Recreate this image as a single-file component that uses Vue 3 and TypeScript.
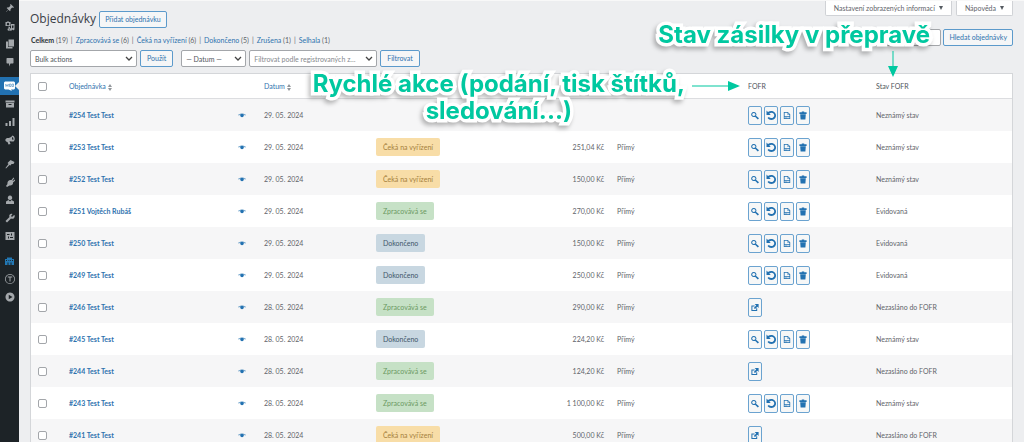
<script setup lang="ts">
import { ref } from 'vue'

type Status = 'pending' | 'processing' | 'done' | ''
interface Order {
  id: number
  name: string
  date: string
  status: Status
  total: string
  origin: string
  sent: boolean
  state: string
}

const statusLabels: Record<string, string> = {
  pending: 'Čeká na vyřízení',
  processing: 'Zpracovává se',
  done: 'Dokončeno',
}

const order = (id: number, name: string, date: string, status: Status, total: string, state: string): Order => ({
  id, name, date, status, total, state,
  origin: total ? 'Přímý' : '',
  sent: state !== 'Nezasláno do FOFR',
})

const orders: Order[] = [
  order(254, 'Test Test', '29. 05. 2024', '', '', 'Neznámý stav'),
  order(253, 'Test Test', '29. 05. 2024', 'pending', '251,04 Kč', 'Neznámý stav'),
  order(252, 'Test Test', '29. 05. 2024', 'pending', '150,00 Kč', 'Neznámý stav'),
  order(251, 'Vojtěch Rubáš', '29. 05. 2024', 'processing', '270,00 Kč', 'Evidovaná'),
  order(250, 'Test Test', '29. 05. 2024', 'done', '150,00 Kč', 'Evidovaná'),
  order(249, 'Test Test', '29. 05. 2024', 'done', '250,00 Kč', 'Evidovaná'),
  order(246, 'Test Test', '28. 05. 2024', 'processing', '290,00 Kč', 'Nezasláno do FOFR'),
  order(245, 'Test Test', '28. 05. 2024', 'done', '224,20 Kč', 'Neznámý stav'),
  order(244, 'Test Test', '28. 05. 2024', 'processing', '124,20 Kč', 'Nezasláno do FOFR'),
  order(243, 'Test Test', '28. 05. 2024', 'processing', '1 100,00 Kč', 'Neznámý stav'),
  order(241, 'Test Test', '28. 05. 2024', 'pending', '500,00 Kč', 'Nezasláno do FOFR'),
]

const views = [
  { label: 'Celkem', count: 19 },
  { label: 'Zpracovává se', count: 6 },
  { label: 'Čeká na vyřízení', count: 6 },
  { label: 'Dokončeno', count: 5 },
  { label: 'Zrušena', count: 1 },
  { label: 'Selhala', count: 1 },
]

interface Item { name: string; path: string; kind?: string }
const menu: Item[][] = [
  [
    { name: 'Příspěvky', path: 'M10.4 3l1-1 6.6 6.5-1 1c-.9.2-1.8 0-2.600-.3L11 12.500c.4 1.500.2 3-.9 4.200L6.800 13.400 3 17.500 2 17.900l.5-1 4-3.900L3.300 9.800c1.200-1 2.700-1.300 4.200-.9l3.300-3.400c-.4-.8-.5-1.700-.4-2.500z' },
    { name: 'Média', path: 'M1 2h2.500l1-1h3l1 1H11v8H1zM6 3.500a2.500 2.500 0 1 0 .01 0zM12 6h7v10a2.500 2.500 0 1 1-2-2.400V9h-3v8a2.500 2.500 0 1 1-2-2.400zM6 11.500h4V17a2.500 2.500 0 1 1-2-2.400V13H6z' },
    { name: 'Stránky', path: 'M7 1h11v14H7zM2 5h4v11h9v3H2z' },
    { name: 'Komentáře', path: 'M4 2h12l1 1v9l-1 1h-5l-3 6v-6H4l-1-1V3z' },
  ],
  [
    { name: 'WooCommerce', path: '', kind: 'woo' },
    { name: 'Produkty', path: 'M1 3h18v4H1zM2 8h16v9H2zm5 2v2h6v-2z' },
    { name: 'Analýzy', path: 'M1 12h4v6H1zM8 8h4v10H8zM15 2h4v16h-4z' },
    { name: 'Marketing', path: 'M15 1c5 1 6 9 2 12-3 0-6-1-8-.5L11 18l-4 1-2-5c-5 0-6-6-1-8 5 0 8-1 11-5zm0 3c-2 2-1 5 1 6.500 1.500-2 1-5-1-6.500z' },
  ],
  [
    { name: 'Vzhled', path: 'M11 2l8 4-2 4-4 0-2 3-2-1-7 7-1-1 6-8-2-2 3-3z' },
    { name: 'Pluginy', path: 'M13 6l4-5 1.500 1.500L15 7l1 1 3.500-3L21 6.500 16 11c1 4-3 7-7 6l-5 3-2-2 3-4c-1-4 2-8 6-8z' },
    { name: 'Uživatelé', path: 'M10 1a4.500 4.500 0 1 1-.01 0zM2 18v-5l5-3 3 3 3-3 5 3v5z' },
    { name: 'Nástroje', path: 'M17 5l-3 3-2-2 3-4c-4-2-8 2-6 6l-8 8 3 3 8-8c4 2 9-2 7-7z' },
    { name: 'Nastavení', path: 'M1 2h18v16H1zm3 4v2h5V6zm8-1v4h2V5zm-6 6v4h2v-4zm4 1v2h6v-2z' },
  ],
  [
    { name: 'FOFR', path: 'M1 6h4V3h10v3h4v12h-5v-5h-2v5H8v-5H6v5H1zm2 2v2h2V8zm5 0v2h1.500V8zm3 0v2h1.500V8zm4 0v2h2V8z', kind: 'blue' },
    { name: 'Toret', path: 'M10 0a10 10 0 1 1-.01 0zm0 1.500a8.500 8.500 0 1 0 .01 0zM5.500 5h9v2H11v8H9V7H5.500z' },
    { name: 'Sbalit menu', path: 'M10 1a9 9 0 1 1-.01 0zM7.500 5.500v9L15 10z' },
  ],
]

const actionIcons: Item[] = [
  { name: 'Zobrazit', path: 'M7 1a6.500 6.500 0 1 1-.01 0zm0 2.500a4 4 0 1 0 .01 0zM10 13l2.500-2.500 7.500 6.500-3 3z' },
  { name: 'Obnovit', path: 'M1 1l3 3C10-1 20 3 20 11c0 9-12 12-17 5l2.500-2c4 4 11 2 11-3 0-6-6-7-10-4l3 3H1z' },
  { name: 'Štítek', path: 'M2 1h10l6 6v12H2zm2 2v8h12V8h-5V3zm8 1v3h3zM4 13v4h2v-3h1v3h2v-3h1v3h2v-3h1v3h3v-4z' },
  { name: 'Smazat', path: 'M7 0h6v2h6v4H1V2h6zM3 7h14l-1 13H4z' },
]
const sendIcon: Item[] = [
  { name: 'Odeslat', path: 'M9 1h10v10l-3-3-6 6-3-3 6-6zM1 5h8v2.500H3.500v9H13V12h2.500v7H1z' },
]

const allSelected = ref(false)
const bulk = ref('Bulk actions')
const month = ref('— Datum —')
const customer = ref('Filtrovat podle registrovaných z…')
const search = ref('')
</script>

<template>
  <div class="admin">
    <nav class="sidebar" aria-label="Hlavní menu">
      <ul v-for="(group, g) in menu" :key="g">
        <li v-for="item in group" :key="item.name">
          <a href="#" :class="item.kind" :aria-label="item.name">
            <svg v-if="item.kind === 'woo'" class="woo-icon" viewBox="0 0 22 20" aria-hidden="true">
              <path fill="#fff" d="M2 1h18l2 2v12l-2 2h-6l2 3-7-3H2l-2-2V3z" />
              <path fill="none" stroke="#2271b1" stroke-width="1" d="M3 6l1 5 2-4 2 4 1-5M11 6h3v5h-3zM16 6h3v5h-3z" />
            </svg>
            <svg v-else viewBox="0 0 20 20" aria-hidden="true"><path fill-rule="evenodd" :d="item.path" /></svg>
          </a>
        </li>
      </ul>
    </nav>

    <main>
      <div class="screen-tabs">
        <button type="button">Nastavení zobrazených informací <span class="down"></span></button>
        <button type="button">Nápověda <span class="down"></span></button>
      </div>

      <header class="heading">
        <h1>Objednávky</h1>
        <a href="#" class="btn">Přidat objednávku</a>
        <form class="search" @submit.prevent>
          <input v-model="search" type="search" aria-label="Hledat objednávky">
          <button type="submit" class="btn">Hledat objednávky</button>
        </form>
      </header>

      <ul class="views">
        <li v-for="(view, i) in views" :key="view.label">
          <a href="#" :class="{ current: i === 0 }">{{ view.label }}</a> ({{ view.count }})
        </li>
      </ul>

      <div class="filters">
        <select v-model="bulk" class="bulk" aria-label="Hromadné akce"><option>Bulk actions</option></select>
        <button type="button" class="btn apply">Použít</button>
        <select v-model="month" class="month" aria-label="Datum"><option>— Datum —</option></select>
        <select v-model="customer" class="customer" aria-label="Zákazník"><option>Filtrovat podle registrovaných z…</option></select>
        <button type="button" class="btn">Filtrovat</button>
      </div>

      <div class="table-area">
        <table>
          <colgroup>
            <col class="c-check"><col class="c-order"><col class="c-date"><col class="c-status">
            <col class="c-total"><col class="c-origin"><col class="c-fofr"><col class="c-state">
          </colgroup>
          <thead>
            <tr>
              <td class="check"><input v-model="allSelected" type="checkbox" aria-label="Vybrat vše"></td>
              <th scope="col"><a href="#">Objednávka <span class="sort"></span></a></th>
              <th scope="col"><a href="#">Datum <span class="sort"></span></a></th>
              <td></td>
              <td></td>
              <td></td>
              <th scope="col">FOFR</th>
              <th scope="col">Stav FOFR</th>
            </tr>
          </thead>
          <tbody>
            <tr v-for="row in orders" :key="row.id">
              <td class="check"><input type="checkbox" :checked="allSelected" :aria-label="`Vybrat #${row.id}`"></td>
              <td>
                <div class="order-cell">
                  <a href="#">#{{ row.id }} {{ row.name }}</a>
                  <button type="button" class="preview" aria-label="Náhled">
                    <svg viewBox="0 0 16 10" aria-hidden="true">
                      <path opacity=".6" d="M0 4C4 0 12 0 16 4L15 5C11 3 5 3 1 5z" />
                      <circle cx="8" cy="5" r="3.500" />
                    </svg>
                  </button>
                </div>
              </td>
              <td>{{ row.date }}</td>
              <td><mark v-if="row.status" :class="row.status">{{ statusLabels[row.status] }}</mark></td>
              <td class="total">{{ row.total }}</td>
              <td class="origin">{{ row.origin }}</td>
              <td>
                <div class="actions">
                  <button v-for="icon in row.sent ? actionIcons : sendIcon" :key="icon.name" type="button" :aria-label="icon.name">
                    <svg viewBox="0 0 20 20" aria-hidden="true"><path fill-rule="evenodd" :d="icon.path" /></svg>
                  </button>
                </div>
              </td>
              <td>{{ row.state }}</td>
            </tr>
          </tbody>
        </table>
      </div>
    </main>

    <div class="note note-state">
      <p>Stav zásilky v přepravě</p>
      <svg class="arrow-down" viewBox="0 0 10 26" aria-hidden="true"><path d="M4.500 0h1v15H10L5 26 0 15h4.500z" /></svg>
    </div>
    <div class="note note-actions">
      <p>Rychlé akce (podání, tisk štítků,<br>sledování...)</p>
      <svg class="arrow-right" viewBox="0 0 48 10" aria-hidden="true"><path d="M0 4.500h36V0l12 5-12 5V5.500H0z" /></svg>
    </div>
  </div>
</template>

<style>
body {
  overflow: hidden;
  background: #f0f0f1;
}
</style>

<style scoped>
* {
  box-sizing: border-box;
}

.admin {
  position: relative;
  display: flex;
  height: 100vh;
  overflow: hidden;
  background: #edeef0;
  color: #5f646a;
  font: 7px/10px Lato, "Open Sans", sans-serif;
}

a {
  color: #2e72ae;
  text-decoration: none;
}

ul {
  margin: 0;
  padding: 0;
  list-style: none;
}

button,
input,
select {
  margin: 0;
  font: inherit;
}

.sidebar {
  flex: none;
  width: 19px;
  margin-top: -1px;
  background: #1d2327;
}

.sidebar ul + ul {
  margin-top: 6px;
}

.sidebar ul:last-child {
  margin-top: 7px;
}

.sidebar a {
  position: relative;
  display: flex;
  align-items: center;
  justify-content: center;
  height: 18px;
}

.sidebar svg {
  width: 10px;
  height: 10px;
  fill: #a4a8ac;
}

.sidebar .woo {
  background: #2271b1;
}

.sidebar .woo::after {
  position: absolute;
  right: 0;
  border: 4px solid transparent;
  border-left: 0;
  border-right-color: #edeef0;
  content: "";
}

.sidebar .woo-icon {
  width: 11px;
}

.sidebar .blue svg {
  width: 11px;
  fill: #2277b3;
}

main {
  flex: 1;
  min-width: 0;
  padding: 0 11px;
  border-top: 1px solid #f8f8f8;
}

.screen-tabs {
  display: flex;
  justify-content: flex-end;
  gap: 4px;
  height: 15px;
}

.screen-tabs button {
  display: flex;
  align-items: center;
  gap: 4px;
  padding: 0 8px;
  border: 1px solid #d0d2d6;
  border-top: 0;
  border-radius: 0 0 2px 2px;
  background: #fff;
  color: #5f646a;
}

.down {
  border: 2px solid transparent;
  border-top: 4px solid #555b61;
  border-bottom: 0;
}

.heading {
  display: flex;
  align-items: center;
  gap: 3px;
  margin-top: -7px;
  height: 20px;
}

h1 {
  margin: 0;
  color: #3b4147;
  font: 400 12px/16px "Open Sans", sans-serif;
}

.btn {
  height: 17px;
  padding: 0 5px;
  border: 1px solid #5c9acb;
  border-radius: 2px;
  background: #f5f6f7;
  color: #2e72ae;
  line-height: 15px;
  white-space: nowrap;
}

.search {
  display: flex;
  gap: 2px;
  margin: 36px 0 0 auto;
}

.search input {
  width: 74px;
  height: 17px;
  border: 1px solid #a3a6aa;
  border-radius: 2px;
  background: #fff;
}

.views {
  display: flex;
  height: 21px;
  padding: 6px 0 0 1px;
}

.views li + li::before {
  padding: 0 3px;
  content: "|";
}

.views .current {
  color: #2c3338;
  font-weight: 700;
}

.filters {
  display: flex;
  gap: 3px;
  height: 17px;
}

.filters .btn {
  padding: 0 6px;
}

select {
  height: 17px;
  padding: 0 14px 0 4px;
  border: 1px solid #a3a6aa;
  border-radius: 2px;
  appearance: none;
  background: #fff url("data:image/svg+xml,%3Csvg xmlns='http://www.w3.org/2000/svg' viewBox='0 0 8 6'%3E%3Cpath d='M1 1l3 3 3-3' fill='none' stroke='%23444' stroke-width='1.3'/%3E%3C/svg%3E") no-repeat right 3px center / 8px 6px;
  color: #50565c;
  text-overflow: ellipsis;
}

.bulk {
  width: 107px;
}

.month {
  width: 65px;
}

.customer {
  width: 128px;
  color: #85898d;
}

.filters .apply {
  margin-right: 5px;
}

.table-area {
  margin-top: 6px;
  border: 1px solid #d4d6d9;
  background: #fff;
}

table {
  width: 100%;
  border-collapse: separate;
  border-spacing: 0;
  table-layout: fixed;
}

.c-check { width: 38px; }
.c-order { width: 195px; }
.c-date { width: 112px; }
.c-status { width: 116px; }
.c-total { width: 112px; }
.c-origin { width: 144px; }
.c-fofr { width: 128px; }
.c-state { width: 136px; }

th,
td {
  height: 32px;
  padding: 0;
  font-weight: 400;
  text-align: left;
  vertical-align: middle;
}

thead th,
thead td {
  height: 25px;
  border-bottom: 1px solid #dcdde0;
  color: #50565c;
}

tbody tr:nth-child(odd) {
  background: #f6f6f7;
}

.check input {
  display: block;
  width: 9px;
  height: 9px;
  margin-left: 7px;
  border: 1px solid #a3a6aa;
  border-radius: 2px;
  appearance: none;
  background: #fff;
}

.check input:checked {
  background: #3578b3;
}

.sort {
  display: inline-flex;
  flex-direction: column;
  gap: 1px;
  vertical-align: middle;
}

.sort::before,
.sort::after {
  border: 2px solid transparent;
  content: "";
}

.sort::before {
  border-top: 0;
  border-bottom: 3px solid #92969b;
}

.sort::after {
  border-top: 3px solid #92969b;
  border-bottom: 0;
}

.order-cell {
  display: flex;
  align-items: center;
  justify-content: space-between;
  padding-right: 18px;
  font-weight: 700;
}

.preview {
  display: flex;
  padding: 0;
  border: 0;
  background: none;
}

.preview svg {
  width: 8px;
  height: 5px;
  fill: #2271b1;
}

mark {
  display: inline-block;
  padding: 4px 7px;
  border-radius: 2px;
}

.pending {
  background: #f8dda7;
  color: #a5803c;
}

.processing {
  background: #c6e1c6;
  color: #6c9a62;
}

.done {
  background: #c8d7e1;
  color: #3f566a;
}

.total {
  text-align: right;
}

.origin {
  padding-left: 13px;
}

.actions {
  display: flex;
  gap: 2px;
}

.actions button {
  display: flex;
  align-items: center;
  justify-content: center;
  width: 14px;
  height: 19px;
  padding: 0;
  border: 1px solid #6ba3d0;
  border-radius: 2px;
  background: #f6f7f7;
}

.actions svg {
  flex: none;
  width: 8px;
  height: 9px;
  fill: #2271b1;
}

.actions button:nth-child(2) svg {
  width: 10px;
  height: 10px;
}

.note {
  position: absolute;
  color: #00c8a0;
  font: 700 24px/27px Inter, "Open Sans", sans-serif;
  text-align: center;
  white-space: nowrap;
  pointer-events: none;
}

.note p {
  margin: 0;
  -webkit-text-stroke: 7px #fff;
  paint-order: stroke fill;
  stroke-linejoin: round;
  filter: drop-shadow(-2px 3px 2px #0004);
}

.note svg {
  position: absolute;
  fill: #00c8a0;
}

.note-state {
  top: 21px;
  right: 94px;
}

.note-actions {
  top: 70px;
  right: 339px;
}

.arrow-down {
  top: 30px;
  right: 32px;
  width: 10px;
  height: 26px;
}

.arrow-right {
  top: 11px;
  left: calc(100% + 7px);
  width: 48px;
  height: 10px;
}
</style>
